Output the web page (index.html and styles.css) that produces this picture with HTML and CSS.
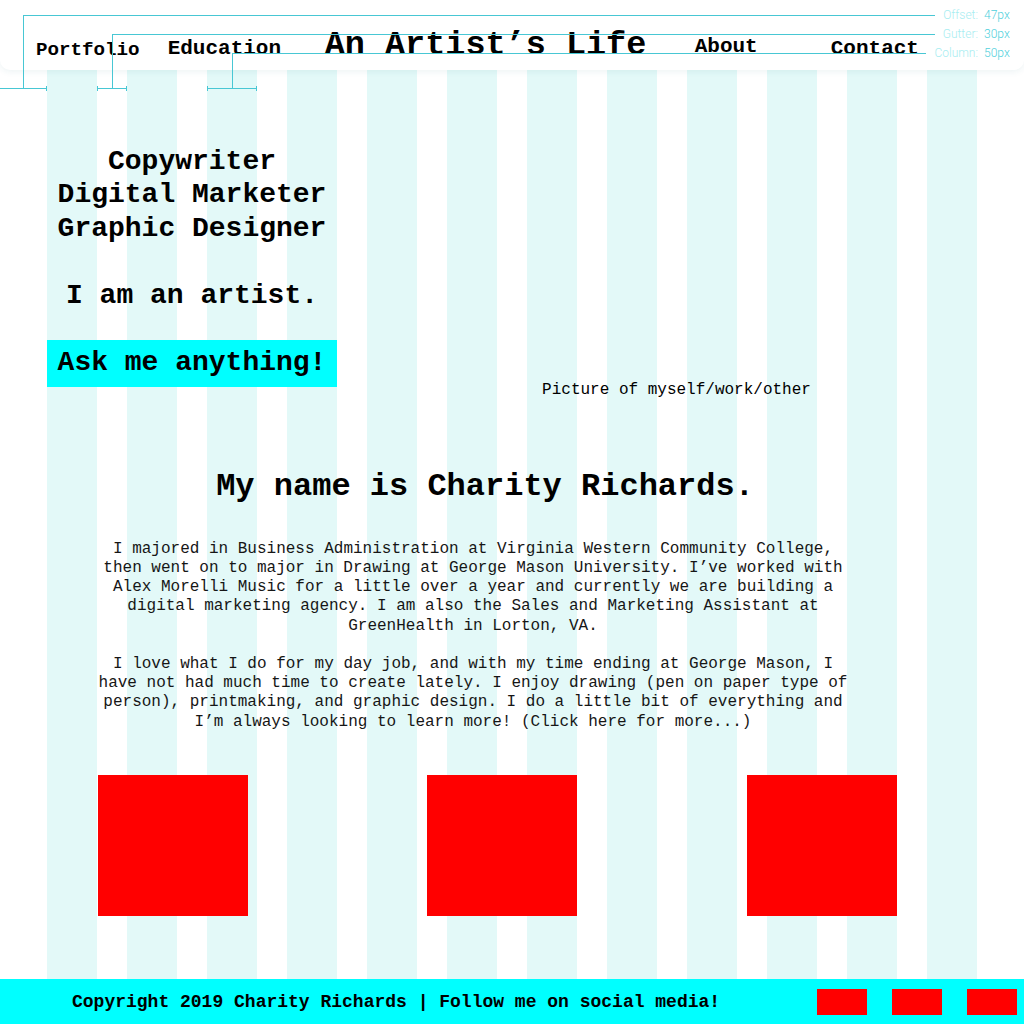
FILE: index.html
```html
<!DOCTYPE html>
<html lang="en">
<head>
<meta charset="utf-8">
<title>An Artist’s Life</title>
<link rel="stylesheet" href="styles.css">
</head>
<body>
<header class="site-header">
  <a class="nav nav-portfolio">Portfolio</a>
  <a class="nav nav-education">Education</a>
  <div class="site-title">An Artist’s Life</div>
  <a class="nav nav-about">About</a>
  <a class="nav nav-contact">Contact</a>
</header>
<main class="content">
  <section class="hero">
    <div class="hero-left">
      <p class="roles">Copywriter<br>Digital Marketer<br>Graphic Designer<br><br>I am an artist.</p>
      <div class="ask">Ask me anything!</div>
    </div>
    <div class="hero-right">Picture of myself/work/other</div>
  </section>
  <section class="about">
    <h1 class="about-title">My name is Charity Richards.</h1>
    <p class="about-text">I majored in Business Administration at Virginia Western Community College, then went on to major in Drawing at George Mason University. I’ve worked with Alex Morelli Music for a little over a year and currently we are building a digital marketing agency. I am also the Sales and Marketing Assistant at GreenHealth in Lorton, VA.</p>
    <p class="about-text about-text-2">I love what I do for my day job, and with my time ending at George Mason, I have not had much time to create lately. I enjoy drawing (pen on paper type of person), printmaking, and graphic design. I do a little bit of everything and I’m always looking to learn more! (Click here for more...)</p>
  </section>
  <div class="gallery">
    <div class="tile tile-1"></div>
    <div class="tile tile-2"></div>
    <div class="tile tile-3"></div>
  </div>
</main>
<footer class="site-footer">
  <div class="copyright">Copyright 2019 Charity Richards | Follow me on social media!</div>
  <div class="socials">
    <span class="social"></span>
    <span class="social"></span>
    <span class="social"></span>
  </div>
</footer>
<div class="grid-overlay">
  <svg class="guide-lines" width="1024" height="100" viewBox="0 0 1024 100">
    <g fill="none" stroke="#48c7d4" stroke-width="1">
      <polyline points="23.5,88 23.5,15.5 935,15.5"/>
      <line x1="0" y1="88.5" x2="47" y2="88.5"/>
      <line x1="46.5" y1="86" x2="46.5" y2="91"/>
      <polyline points="112.5,88 112.5,34.5 935,34.5"/>
      <line x1="97" y1="88.5" x2="127" y2="88.5"/>
      <line x1="97.5" y1="86" x2="97.5" y2="91"/>
      <line x1="126.5" y1="86" x2="126.5" y2="91"/>
      <polyline points="232.5,88 232.5,53.5 926,53.5"/>
      <line x1="207" y1="88.5" x2="257" y2="88.5"/>
      <line x1="207.5" y1="86" x2="207.5" y2="91"/>
      <line x1="256.5" y1="86" x2="256.5" y2="91"/>
    </g>
  </svg>
  <div class="guide-labels">
    <span class="g-label">Offset:</span><span class="g-value">47px</span>
    <span class="g-label">Gutter:</span><span class="g-value">30px</span>
    <span class="g-label">Column:</span><span class="g-value">50px</span>
  </div>
</div>
</body>
</html>
```
FILE: styles.css
```css
html, body {
  margin: 0;
  padding: 0;
}

body {
  min-height: 100vh;
  display: flex;
  flex-direction: column;
  font-family: "Liberation Mono", "Courier New", monospace;
  color: #000;
  background-color: #fff;
  background-image: repeating-linear-gradient(90deg, #e3f9f8 0 50px, transparent 50px 80px);
  background-position: 47px 0;
  background-size: 930px 100%;
  background-repeat: no-repeat;
}

/* Header */
.site-header {
  position: relative;
  z-index: 1;
  height: 70px;
  flex: none;
  display: flex;
  align-items: flex-start;
  background: #fff;
  border-radius: 0 0 10px 10px;
  box-shadow: 0 2px 6px rgba(40, 120, 130, 0.08);
}

.nav,
.site-title {
  font-weight: bold;
  line-height: normal;
  white-space: nowrap;
  color: #000;
}

.nav-portfolio {
  font-size: 19.2px;
  margin-left: 36px;
  margin-top: 38.5px;
}

.nav-education {
  font-size: 21px;
  margin-left: 28px;
  margin-top: 37px;
}

.site-title {
  font-size: 33.5px;
  margin-left: 43.6px;
  margin-top: 25.5px;
}

.nav-about {
  font-size: 21px;
  margin-left: 48.4px;
  margin-top: 34.7px;
}

.nav-contact {
  font-size: 21px;
  margin-left: 73px;
  margin-top: 37px;
}

/* Hero */
.content {
  flex: none;
}

.hero {
  display: flex;
  align-items: flex-start;
  padding-top: 75px;
}

.hero-left {
  width: 290px;
  margin-left: 47px;
  text-align: center;
  font-weight: bold;
  font-size: 28px;
  line-height: 33.4px;
}

.roles {
  margin: 0;
}

.ask {
  margin-top: 28px;
  padding: 6px 0 8px;
  background: #00ffff;
  white-space: nowrap;
}

.hero-right {
  flex: 1;
  margin-right: 8px;
  margin-top: 236px;
  text-align: center;
  font-size: 16px;
  line-height: 19.2px;
}

/* About */
.about {
  width: 750px;
  margin-left: 98px;
  text-align: center;
}

.about-title {
  margin: 69px 0 34.6px;
  padding-left: 24px;
  font-size: 32px;
  line-height: 36px;
  font-weight: bold;
  white-space: nowrap;
}

.about-text {
  margin: 0;
  font-size: 16px;
  line-height: 19.2px;
  color: #161616;
}

.about-text-2 {
  margin-top: 19.2px;
}

/* Gallery */
.gallery {
  display: flex;
  margin-top: 43.2px;
  padding-left: 98px;
}

.tile {
  width: 150px;
  height: 141px;
  background: #ff0000;
  flex: none;
}

.tile-2 {
  margin-left: 179px;
}

.tile-3 {
  margin-left: 170px;
}

/* Footer */
.site-footer {
  margin-top: auto;
  height: 45px;
  flex: none;
  display: flex;
  align-items: center;
  background: #00ffff;
  padding: 0 7px 0 72px;
}

.copyright {
  flex: 1;
  font-size: 18px;
  font-weight: bold;
  line-height: 20px;
  white-space: nowrap;
  padding-top: 1px;
}

.socials {
  display: flex;
  gap: 25px;
}

.social {
  width: 50px;
  height: 26px;
  background: #ff0000;
}

/* Grid overlay tool */
.grid-overlay {
  position: absolute;
  top: 0;
  left: 0;
  width: 1024px;
  height: 100px;
  z-index: 5;
  pointer-events: none;
}

.guide-lines {
  display: block;
  shape-rendering: crispEdges;
}

.guide-labels {
  position: absolute;
  top: 6px;
  left: 930px;
  display: grid;
  grid-template-columns: 48px auto;
  column-gap: 6px;
  font-family: Roboto, "Noto Sans", sans-serif;
  font-weight: 300;
  font-size: 12px;
  line-height: 19px;
}

.g-label {
  text-align: right;
  color: #a8edf1;
}

.g-value {
  color: #4fd0dc;
}
```
